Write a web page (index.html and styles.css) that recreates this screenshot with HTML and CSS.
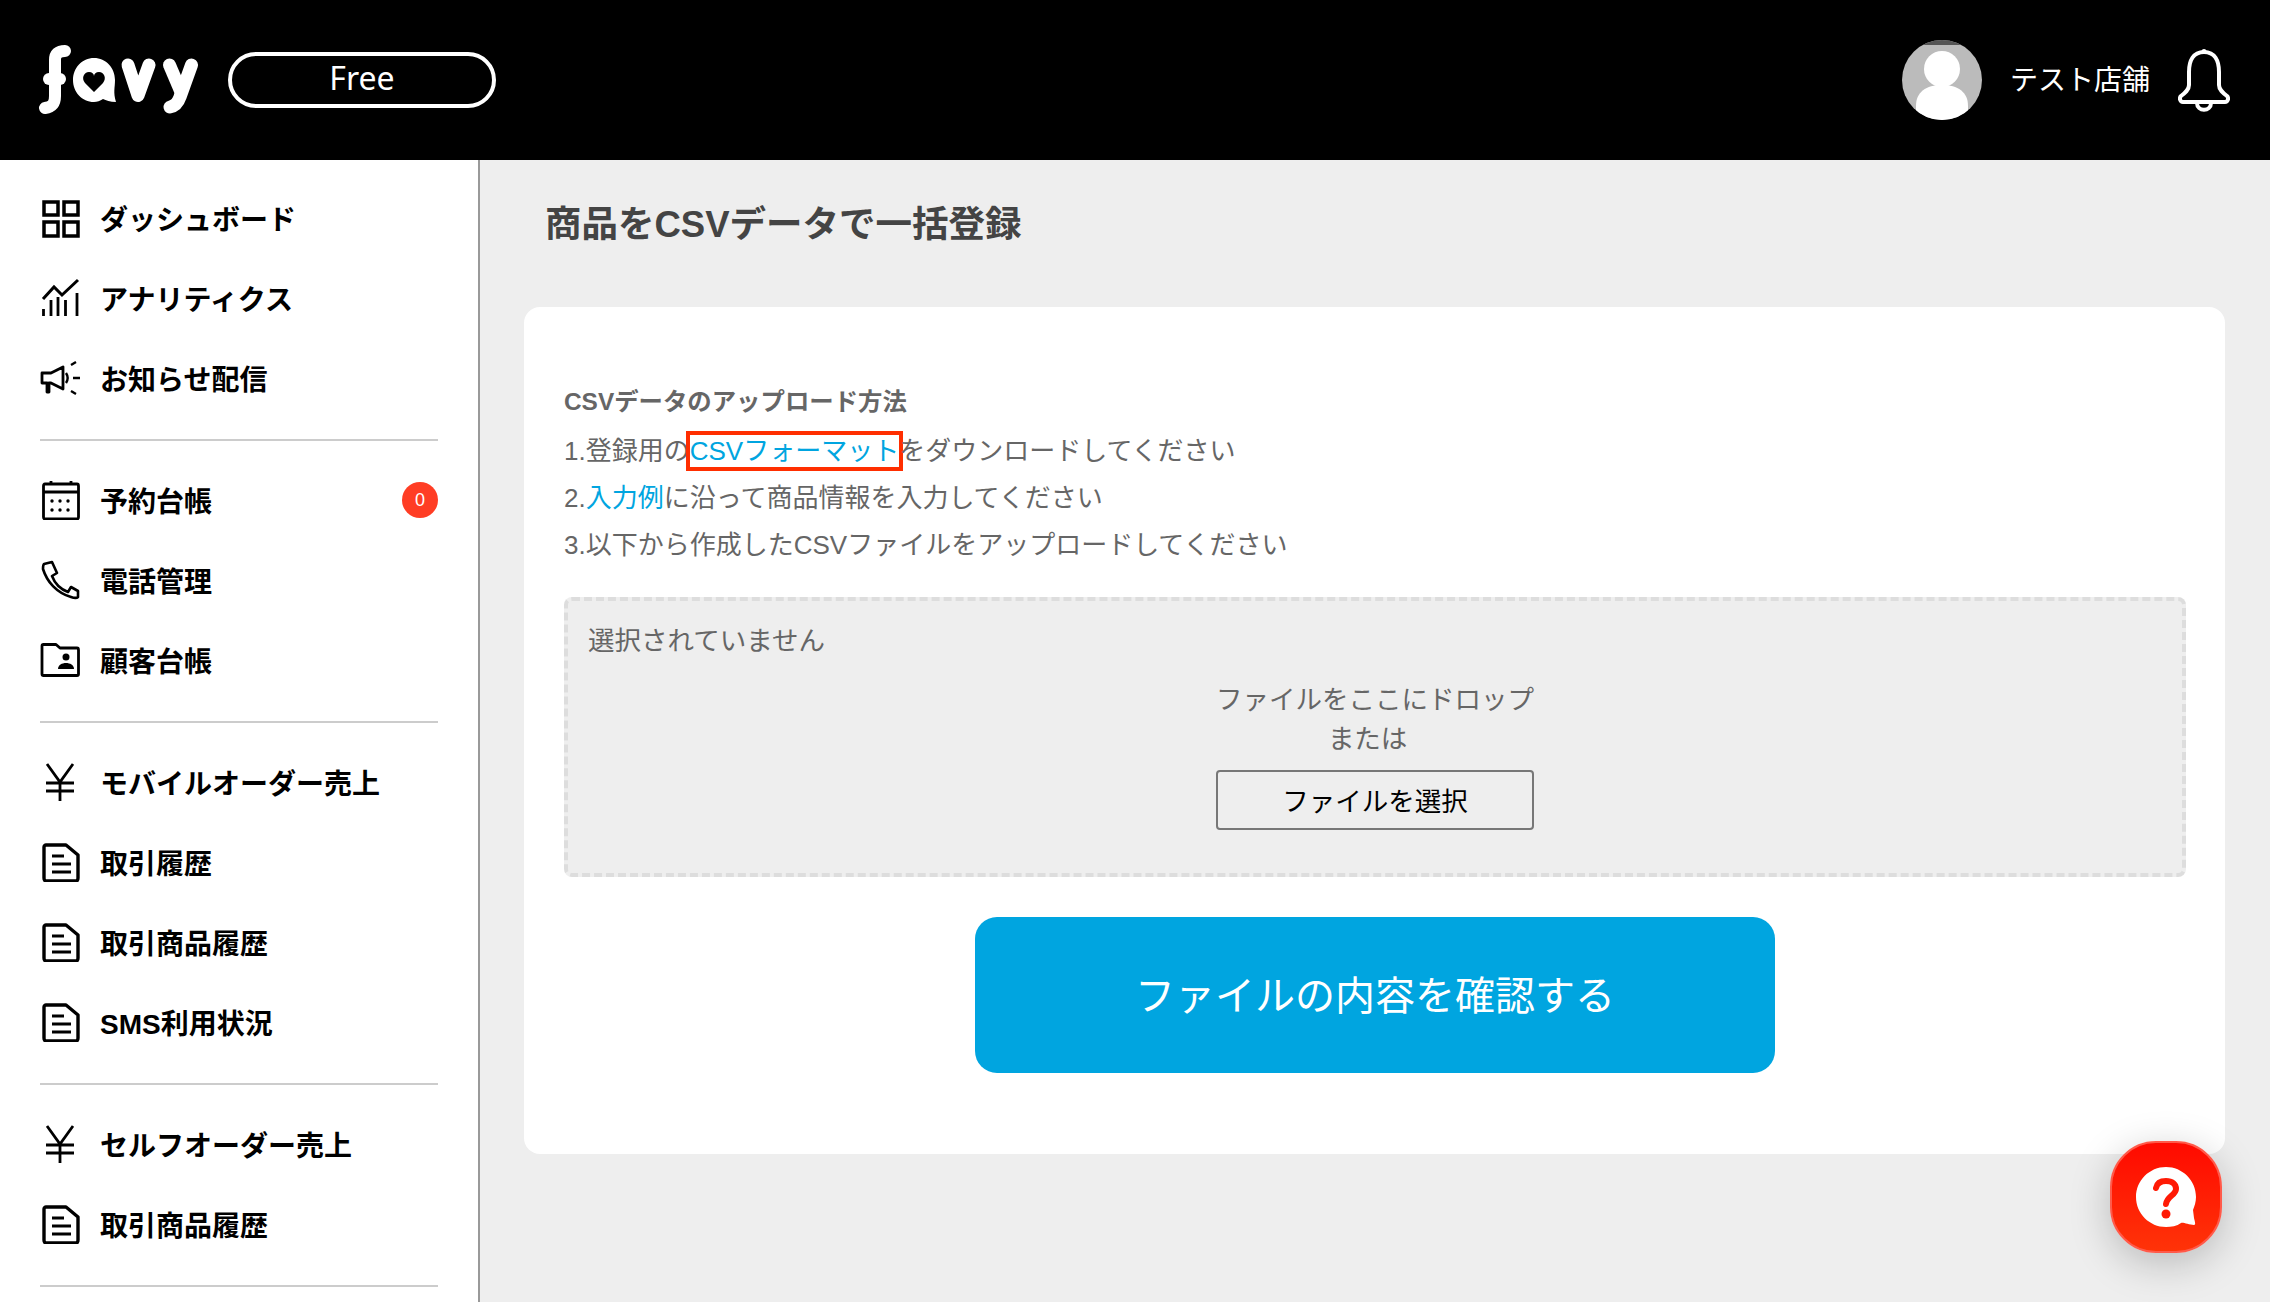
FILE: index.html
```html
<!DOCTYPE html>
<html lang="ja">

<head>
  <meta charset="UTF-8" />
  <meta name="viewport" content="width=device-width, initial-scale=1.0" />
  <title>商品をCSVデータで一括登録</title>
  <link rel="stylesheet" href="styles.css">
</head>

<body>
  <svg class="defs" width="0" height="0">
    <symbol id="icon-yen" viewBox="0 0 40 40">
      <path d="M7 2 20 20 33 2M6 21H34M6 29H34M20 20V39" fill="none" stroke="#000" stroke-width="2.800" />
    </symbol>
    <symbol id="icon-doc" viewBox="0 0 40 40">
      <path d="M4 5C4 3.500 5 3 6 3H26L38 13V36C38 38 37 39 36 39H6C5 39 4 38 4 36Z" fill="none" stroke="#000" stroke-width="3.400" stroke-linejoin="round" />
      <path d="M12 14H24M12 22H31M12 30H31" fill="none" stroke="#000" stroke-width="3" />
    </symbol>
  </svg>

  <header class="topbar">
    <div class="brand">
      <svg class="logo" width="170" height="80" viewBox="0 0 170 80" role="img" aria-label="favy">
        <g fill="none" stroke="#fff" stroke-width="12" stroke-linecap="round" stroke-linejoin="round">
          <path d="M27 11C20 11 17 14 17 20V56C17 64 14 67 7 68" />
          <path d="M11 39H22" />
          <path d="M90 25 100 55.500 111 25" stroke-width="13" />
          <path d="M131.500 25 143 52" stroke-width="13" />
          <path d="M153.500 25 142 57C140 63 137 66 132 67" stroke-width="13" />
        </g>
        <path d="M56 18C68 18 77 28 77 40C77 48 75 52 78 62C72 62 68 60 65 59C62 61 59 62 56 62C44 62 35 52 35 40C35 28 44 18 56 18Z" fill="#fff" />
        <path d="M56 52 47 43C43 38 46 32 51 32C54 32 56 34 56 36C56 34 58 32 61 32C66 32 69 38 65 43Z" fill="#000" />
      </svg>
      <span class="plan">Free</span>
    </div>
    <div class="account">
      <svg class="avatar" width="80" height="80" viewBox="0 0 80 80" aria-hidden="true">
        <clipPath id="avatar-clip"><circle cx="40" cy="40" r="40" /></clipPath>
        <g clip-path="url(#avatar-clip)">
          <rect width="80" height="80" fill="#bbb" />
          <rect width="80" height="5" fill="#555" />
          <circle cx="40" cy="29" r="18" fill="#fff" />
          <path d="M14 80V66C14 52 24 45 40 45C56 45 66 52 66 66V80Z" fill="#fff" />
        </g>
      </svg>
      <span class="shop-name">テスト店舗</span>
      <svg class="bell" width="52" height="64" viewBox="0 0 52 64" aria-hidden="true">
        <path d="M26 4C15 4 11 13 11 24V37C11 42 7 45 3 48C1 50 2 54 5 54H47C50 54 51 50 49 48C45 45 41 42 41 37V24C41 13 37 4 26 4Z" fill="none" stroke="#fff" stroke-width="4" stroke-linejoin="round" />
        <path d="M19 55C19 64 33 64 33 55" fill="none" stroke="#fff" stroke-width="4" />
        <circle cx="26" cy="3.500" r="2.500" fill="#fff" />
      </svg>
    </div>
  </header>

  <div class="page">
    <nav class="sidebar">
      <ul class="nav-group">
        <li class="nav-item">
          <svg class="nav-icon" viewBox="0 0 40 40" aria-hidden="true">
            <path d="M4 4H18V17H4ZM24 4H38V17H24ZM4 24H18V38H4ZM24 24H38V38H24Z" fill="none" stroke="#000" stroke-width="3.500" />
          </svg>
          <span>ダッシュボード</span>
        </li>
        <li class="nav-item">
          <svg class="nav-icon" viewBox="0 0 40 40" aria-hidden="true">
            <path d="M3 21 14 9 22 17 38 2" fill="none" stroke="#000" stroke-width="3" />
            <path d="M3.500 38V31M11 38V22M18 38V19M25.500 38V22M37 38V15" fill="none" stroke="#000" stroke-width="2.800" />
          </svg>
          <span>アナリティクス</span>
        </li>
        <li class="nav-item">
          <svg class="nav-icon" viewBox="0 0 40 40" aria-hidden="true">
            <path d="M2 15H11L23 9V31L11 25H9V34H7V25H2Z" fill="none" stroke="#000" stroke-width="2.800" stroke-linejoin="round" />
            <path d="M26 15C28 18 28 22 26 25M31 7 36 4M33 20H40M31 33 36 36" fill="none" stroke="#000" stroke-width="2.400" />
          </svg>
          <span>お知らせ配信</span>
        </li>
      </ul>

      <ul class="nav-group">
        <li class="nav-item">
          <svg class="nav-icon" viewBox="0 0 40 40" aria-hidden="true">
            <path d="M5 4H37C38 4 38.500 5 38.500 6V37C38.500 38 38 39 37 39H5C4 39 3.500 38 3.500 37V6C3.500 5 4 4 5 4ZM3.500 12H38.500M11 1V5M31 1V5" fill="none" stroke="#000" stroke-width="2.800" />
            <g fill="#000">
              <circle cx="12" cy="21" r="1.700" /><circle cx="20" cy="21" r="1.700" /><circle cx="28" cy="21" r="1.700" />
              <circle cx="12" cy="30" r="1.700" /><circle cx="20" cy="30" r="1.700" /><circle cx="28" cy="30" r="1.700" />
            </g>
          </svg>
          <span>予約台帳</span>
          <span class="badge">0</span>
        </li>
        <li class="nav-item">
          <svg class="nav-icon" viewBox="0 0 40 40" aria-hidden="true">
            <path d="M4 4 12 2 17 13 12 16C15 24 20 29 28 32L31 27 38 31V37C37 38 34 38 31 37C17 33 7 22 3 9C3 7 3 5 4 4Z" fill="none" stroke="#000" stroke-width="2.600" stroke-linejoin="round" />
          </svg>
          <span>電話管理</span>
        </li>
        <li class="nav-item">
          <svg class="nav-icon" viewBox="0 0 40 40" aria-hidden="true">
            <path d="M2 6C2 5 2.500 4.500 3.500 4.500H16L20 8H37C38 8 38.500 9 38.500 10V34C38.500 35 38 35.500 37 35.500H3.500C2.500 35.500 2 35 2 34Z" fill="none" stroke="#000" stroke-width="2.800" stroke-linejoin="round" />
            <circle cx="26" cy="17" r="3.500" fill="#000" />
            <path d="M18 29C18 25 22 23 26 23C30 23 34 25 34 29Z" fill="#000" />
          </svg>
          <span>顧客台帳</span>
        </li>
      </ul>

      <ul class="nav-group">
        <li class="nav-item">
          <svg class="nav-icon" viewBox="0 0 40 40" aria-hidden="true"><use href="#icon-yen" /></svg>
          <span>モバイルオーダー売上</span>
        </li>
        <li class="nav-item">
          <svg class="nav-icon" viewBox="0 0 40 40" aria-hidden="true"><use href="#icon-doc" /></svg>
          <span>取引履歴</span>
        </li>
        <li class="nav-item">
          <svg class="nav-icon" viewBox="0 0 40 40" aria-hidden="true"><use href="#icon-doc" /></svg>
          <span>取引商品履歴</span>
        </li>
        <li class="nav-item">
          <svg class="nav-icon" viewBox="0 0 40 40" aria-hidden="true"><use href="#icon-doc" /></svg>
          <span>SMS利用状況</span>
        </li>
      </ul>

      <ul class="nav-group">
        <li class="nav-item">
          <svg class="nav-icon" viewBox="0 0 40 40" aria-hidden="true"><use href="#icon-yen" /></svg>
          <span>セルフオーダー売上</span>
        </li>
        <li class="nav-item">
          <svg class="nav-icon" viewBox="0 0 40 40" aria-hidden="true"><use href="#icon-doc" /></svg>
          <span>取引商品履歴</span>
        </li>
      </ul>
    </nav>

    <main class="content">
      <h1 class="page-title">商品をCSVデータで一括登録</h1>

      <section class="card">
        <h2 class="howto-title">CSVデータのアップロード方法</h2>
        <p class="howto-line">1.登録用の<a class="link link-marked" href="#">CSVフォーマット</a>をダウンロードしてください</p>
        <p class="howto-line">2.<a class="link" href="#">入力例</a>に沿って商品情報を入力してください</p>
        <p class="howto-line">3.以下から作成したCSVファイルをアップロードしてください</p>

        <div class="dropzone">
          <p class="file-state">選択されていません</p>
          <div class="drop-center">
            <p class="drop-text">ファイルをここにドロップ<br>または&nbsp;&nbsp;</p>
            <button class="file-btn" type="button">ファイルを選択</button>
          </div>
        </div>

        <button class="submit-btn" type="button">ファイルの内容を確認する</button>
      </section>
    </main>
  </div>

  <button class="help" type="button" aria-label="ヘルプ">
    <svg width="60" height="60" viewBox="0 0 60 60" aria-hidden="true">
      <path d="M30 0C46.500 0 60 13.500 60 30C60 35 58.500 39 57 43L58 51C59 55 60 58 58 58C53 58 47 55 45 56C41 59 35 60 30 60C13.500 60 0 46.500 0 30C0 13.500 13.500 0 30 0Z" fill="#fff" />
      <path d="M20 21C21 16 25 14 30 14C36 14 40 17 40 22C40 28 31 29 30 37" fill="none" stroke="#ff1a05" stroke-width="6" stroke-linecap="round" />
      <circle cx="30" cy="47" r="4.500" fill="#ff1a05" />
    </svg>
  </button>
</body>

</html>
```

FILE: styles.css
```css
* {
  box-sizing: border-box;
}

html,
body {
  height: 100%;
}

body {
  margin: 0;
  display: flex;
  flex-direction: column;
  overflow: hidden;
  font-family: "Liberation Sans", "Noto Sans CJK JP", sans-serif;
  background-color: #eee;
  color: #666;
}

.defs {
  position: absolute;
}

ul,
p,
h1,
h2 {
  margin: 0;
  padding: 0;
}

/* header */
.topbar {
  flex: none;
  height: 160px;
  display: flex;
  justify-content: space-between;
  align-items: center;
  padding: 0 40px 0 38px;
  background-color: #000;
  color: #fff;
}

.brand {
  display: flex;
  align-items: center;
}

.logo {
  display: block;
}

.plan {
  width: 268px;
  height: 56px;
  margin-left: 20px;
  padding-bottom: 5px;
  display: flex;
  align-items: center;
  justify-content: center;
  border: 4px solid #fff;
  border-radius: 28px;
  font-family: "Noto Sans", sans-serif;
  font-size: 32px;
}

.account {
  display: flex;
  align-items: center;
}

.shop-name {
  margin: 0 0 5px 28px;
  font-size: 28px;
}

.bell {
  display: block;
  margin-left: 28px;
}

/* sidebar */
.page {
  flex: 1;
  display: flex;
  min-height: 0;
}

.sidebar {
  flex: none;
  width: 480px;
  padding: 18px 40px 0;
  overflow: hidden;
  background-color: #fff;
  border-right: 2px solid #999;
}

.nav-group {
  list-style: none;
  padding-bottom: 21px;
  margin-bottom: 19px;
  border-bottom: 2px solid #ccc;
}

.nav-item {
  height: 80px;
  display: flex;
  align-items: center;
  gap: 20px;
  font-size: 28px;
  font-weight: 700;
  color: #000;
}

.nav-icon {
  flex: none;
  width: 40px;
  height: 40px;
}

.badge {
  width: 36px;
  height: 36px;
  margin-left: auto;
  display: flex;
  align-items: center;
  justify-content: center;
  border-radius: 50%;
  background-color: #ff3d24;
  color: #fff;
  font-size: 18px;
  font-weight: 400;
}

/* main */
.content {
  flex: 1;
  padding: 41px 45px 0 44px;
}

.page-title {
  padding-left: 21px;
  margin-bottom: 58px;
  font-size: 36.500px;
  line-height: 48px;
  font-weight: 700;
  color: #444;
}

.card {
  height: 847px;
  padding: 71px 39px 0 40px;
  border-radius: 16px;
  background-color: #fff;
}

.howto-title {
  margin-bottom: 3px;
  font-size: 24.400px;
  line-height: 47px;
  font-weight: 700;
}

.howto-line {
  font-size: 26px;
  line-height: 47px;
}

.link {
  color: #00a5e0;
  text-decoration: none;
}

.link-marked {
  display: inline-block;
  line-height: 32px;
  outline: 4px solid #ff2e00;
}

.dropzone {
  height: 280px;
  margin-top: 28px;
  padding: 20px 20px 0;
  border: 4px dashed #ddd;
  border-radius: 8px;
  background-color: #eee;
  font-size: 26.500px;
}

.file-state {
  line-height: 40px;
}

.drop-center {
  margin-top: 20px;
  text-align: center;
}

.drop-text {
  line-height: 39px;
}

.file-btn {
  display: block;
  width: 318px;
  height: 60px;
  margin: 11px auto 0;
  padding: 0 0 2px;
  border: 2px solid #777;
  border-radius: 4px;
  background-color: transparent;
  color: #000;
  font-family: inherit;
  font-size: 26.500px;
}

.submit-btn {
  display: block;
  width: 800px;
  height: 156px;
  margin: 40px auto 0;
  padding: 0 0 4px;
  border: none;
  border-radius: 22px;
  background-color: #00a5e0;
  color: #fff;
  font-family: inherit;
  font-size: 40px;
}

.help {
  position: fixed;
  left: 2110px;
  top: 1141px;
  width: 112px;
  height: 112px;
  display: flex;
  align-items: center;
  justify-content: center;
  padding: 0;
  border: 2px solid #ff5a4a;
  border-radius: 46px;
  background: linear-gradient(#ff0a00, #ff3308);
  box-shadow: 0 10px 40px rgba(0, 0, 0, 0.22);
}
```
